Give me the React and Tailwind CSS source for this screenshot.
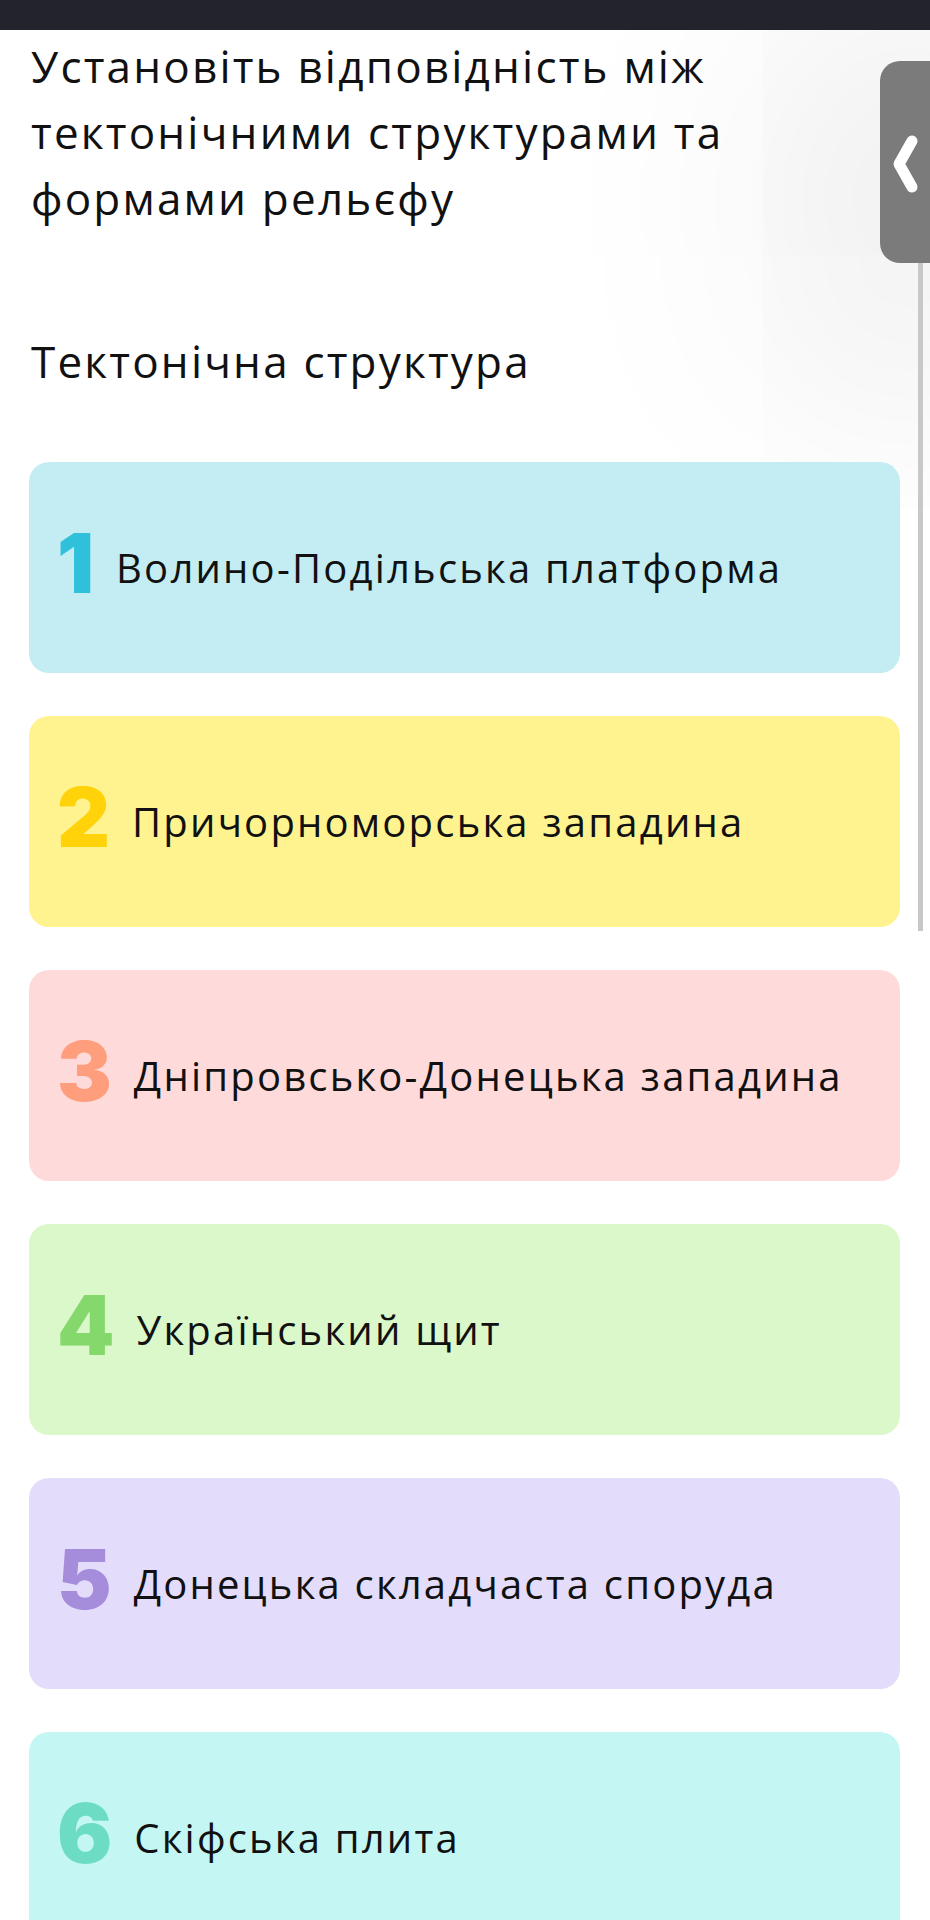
import React from 'react';

const items = [
  { n: '1', text: 'Волино-Подільська платформа', bg: 'bg-[#c3edf3]', num: 'text-[#2fc0dc]' },
  { n: '2', text: 'Причорноморська западина', bg: 'bg-[#fff38f]', num: 'text-[#ffd20a]' },
  { n: '3', text: 'Дніпровсько-Донецька западина', bg: 'bg-[#ffdada]', num: 'text-[#ff9e7d]' },
  { n: '4', text: 'Український щит', bg: 'bg-[#daf8c9]', num: 'text-[#85d86b]' },
  { n: '5', text: 'Донецька складчаста споруда', bg: 'bg-[#e3dcfb]', num: 'text-[#a68ddc]' },
  { n: '6', text: 'Скіфська плита', bg: 'bg-[#c4f7f4]', num: 'text-[#6cdcc4]' },
];

function Card({ item }) {
  return (
    <div className={`${item.bg} h-[211px] rounded-[20px] flex items-center gap-[22px] pl-[28px] pr-6`}>
      <span
        className={`${item.num} text-[82px] leading-none font-black -mt-[8px]`}
        style={{ fontFamily: 'Inter, sans-serif' }}
      >
        {item.n}
      </span>
      <span className="text-[40px] leading-[56px] tracking-[2.2px] text-[#111]">{item.text}</span>
    </div>
  );
}

export default function App() {
  return (
    <div
      className="relative w-[930px] h-[1920px] overflow-hidden bg-white"
      style={{ fontFamily: '"Open Sans", "Noto Sans", sans-serif' }}
    >
      {/* side handle with its soft shade */}
      <div className="absolute right-0 top-[61px] w-[50px] h-[202px] rounded-l-[20px] bg-[#7b7b7b] shadow-[0_40px_260px_90px_rgba(0,0,0,0.09)]">
        <svg width="50" height="202" viewBox="0 0 50 202">
          <path d="M32 80 L19 103 L32 126" fill="none" stroke="#fff" strokeWidth="11" strokeLinecap="round" strokeLinejoin="round" />
        </svg>
      </div>
      <div className="absolute right-[7px] top-[263px] w-[5px] h-[668px] bg-[#c8c8c8]" />

      <div className="relative z-10 h-[30px] bg-[#22232b]" />

      <div className="relative pl-[31px] pr-[60px]">
        <h1 className="mt-[3px] text-[44px] leading-[66px] tracking-[2.2px] font-normal text-[#111]">
          Установіть відповідність між тектонічними структурами та формами рельєфу
        </h1>
        <h2 className="mt-[97px] text-[44px] leading-[66px] tracking-[2.2px] font-normal text-[#111]">
          Тектонічна структура
        </h2>
      </div>

      <div className="relative flex flex-col gap-[43px] pl-[29px] pr-[30px] mt-[68px]">
        {items.map((it) => (
          <Card key={it.n} item={it} />
        ))}
      </div>
    </div>
  );
}
